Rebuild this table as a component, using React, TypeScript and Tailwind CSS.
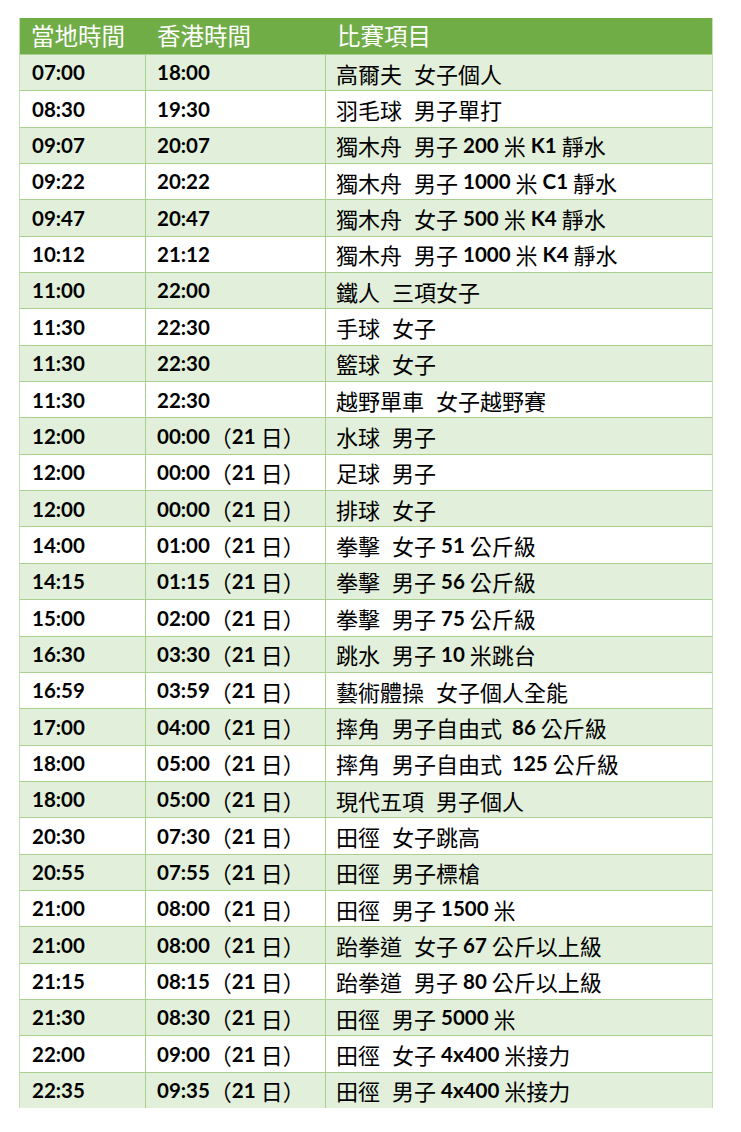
import React from "react";

// 賽程表：當地時間 / 香港時間 / 比賽項目
const rows: [string, string, string][] = [
  ["07:00", "18:00", "高爾夫 女子個人"],
  ["08:30", "19:30", "羽毛球 男子單打"],
  ["09:07", "20:07", "獨木舟 男子 200 米 K1 靜水"],
  ["09:22", "20:22", "獨木舟 男子 1000 米 C1 靜水"],
  ["09:47", "20:47", "獨木舟 女子 500 米 K4 靜水"],
  ["10:12", "21:12", "獨木舟 男子 1000 米 K4 靜水"],
  ["11:00", "22:00", "鐵人 三項女子"],
  ["11:30", "22:30", "手球 女子"],
  ["11:30", "22:30", "籃球 女子"],
  ["11:30", "22:30", "越野單車 女子越野賽"],
  ["12:00", "00:00（21 日）", "水球 男子"],
  ["12:00", "00:00（21 日）", "足球 男子"],
  ["12:00", "00:00（21 日）", "排球 女子"],
  ["14:00", "01:00（21 日）", "拳擊 女子 51 公斤級"],
  ["14:15", "01:15（21 日）", "拳擊 男子 56 公斤級"],
  ["15:00", "02:00（21 日）", "拳擊 男子 75 公斤級"],
  ["16:30", "03:30（21 日）", "跳水 男子 10 米跳台"],
  ["16:59", "03:59（21 日）", "藝術體操 女子個人全能"],
  ["17:00", "04:00（21 日）", "摔角 男子自由式  86 公斤級"],
  ["18:00", "05:00（21 日）", "摔角 男子自由式  125 公斤級"],
  ["18:00", "05:00（21 日）", "現代五項 男子個人"],
  ["20:30", "07:30（21 日）", "田徑 女子跳高"],
  ["20:55", "07:55（21 日）", "田徑 男子標槍"],
  ["21:00", "08:00（21 日）", "田徑 男子 1500 米"],
  ["21:00", "08:00（21 日）", "跆拳道 女子 67 公斤以上級"],
  ["21:15", "08:15（21 日）", "跆拳道 男子 80 公斤以上級"],
  ["21:30", "08:30（21 日）", "田徑 男子 5000 米"],
  ["22:00", "09:00（21 日）", "田徑 女子 4x400 米接力"],
  ["22:35", "09:35（21 日）", "田徑 男子 4x400 米接力"],
];

const isLatin = (c: string) => /[A-Za-z0-9:]/.test(c);

// latin / digit runs are bold, CJK stays regular.
// a single space between two CJK words is rendered wider, like the source sheet
function Mixed({ text }: { text: string }) {
  const parts = text.split(/([A-Za-z0-9:]+| )/).filter((p) => p !== "");
  return (
    <>
      {parts.map((p, i) => {
        if (isLatin(p[0])) {
          return (
            <span key={i} className="font-bold font-['Lato',sans-serif] text-[20.5px]">
              {p}
            </span>
          );
        }
        if (p === " ") {
          const prev = parts[i - 1] ?? "";
          const next = parts[i + 1] ?? "";
          const wide = prev && next && !isLatin(prev[prev.length - 1]) && !isLatin(next[0]) && next !== " " && prev !== " ";
          return (
            <span key={i} className={wide ? "inline-block w-[12px]" : "inline-block w-[5px]"} />
          );
        }
        return <span key={i}>{p}</span>;
      })}
    </>
  );
}

export default function App() {
  return (
    <div className="min-h-[1132px] bg-white pt-[18px] pl-[19px] font-['Noto_Sans_CJK_TC','Noto_Sans',sans-serif] text-black">
      <div className="w-[694px] border-x border-[#c5dfb3]">
        <div className="grid grid-cols-[126px_180px_388px] h-[36px] bg-[#70ad47] text-white text-[23.5px] leading-none">
          <div className="flex items-center pl-[11px]">當地時間</div>
          <div className="flex items-center pl-[11px]">香港時間</div>
          <div className="flex items-center pl-[11px]">比賽項目</div>
        </div>
        {rows.map((r, i) => (
          <div
            key={i}
            className={`grid grid-cols-[126px_180px_388px] h-[36.35px] border-t border-[#a9d08e] text-[22px] leading-none ${
              i % 2 === 0 ? "bg-[#e2efda]" : "bg-white"
            }`}
          >
            <div className="flex items-center pl-[12px] border-r border-[#a9d08e]">
              <Mixed text={r[0]} />
            </div>
            <div className="flex items-center pl-[11px] border-r border-[#a9d08e]">
              <Mixed text={r[1]} />
            </div>
            <div className="flex items-center pl-[10px]">
              <Mixed text={r[2]} />
            </div>
          </div>
        ))}
      </div>
    </div>
  );
}
